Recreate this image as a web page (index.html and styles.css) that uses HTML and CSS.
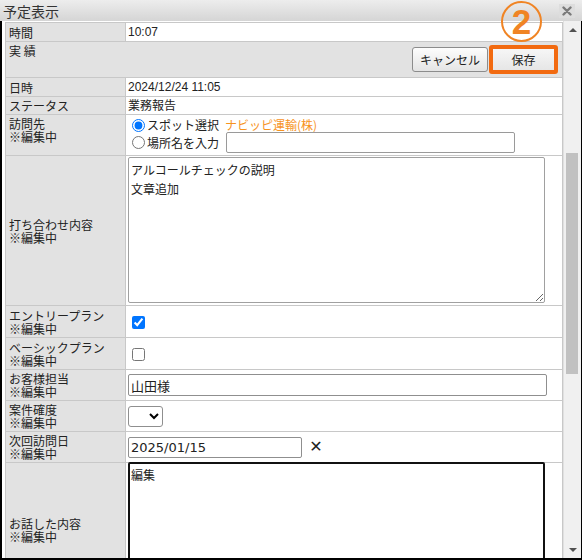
FILE: index.html
```html
<!DOCTYPE html>
<html lang="ja">
<head>
    <meta charset="UTF-8">
    <meta name="viewport" content="width=device-width, initial-scale=1.0">
    <link rel="stylesheet" href="styles.css">
    <title>予定表示</title>
</head>
<body>
    <div class="dialog">
        <div class="titleBar">
            <span class="titleText">予定表示</span>
            <button class="closeButton" aria-label="閉じる">
                <svg width="10" height="10" viewBox="0 0 10 10">
                    <path d="M1.5 1.5 L8.5 8.5 M8.5 1.5 L1.5 8.5" stroke="#7a7a7a" stroke-width="2.4" stroke-linecap="round"/>
                </svg>
            </button>
        </div>

        <div class="dialogFrame">
            <div class="dialogContent">
                <table class="scheduleTable">
                    <tr class="rowTime">
                        <th>時間</th>
                        <td>10:07</td>
                    </tr>
                    <tr class="rowResult">
                        <td colspan="2" class="resultCell">
                            <div class="resultBar">
                                <span class="resultLabel">実 績</span>
                                <div class="resultButtons">
                                    <button class="cancelButton">キャンセル</button>
                                    <button class="saveButton">保存</button>
                                </div>
                            </div>
                        </td>
                    </tr>
                    <tr class="rowDate">
                        <th>日時</th>
                        <td>2024/12/24 11:05</td>
                    </tr>
                    <tr class="rowStatus">
                        <th>ステータス</th>
                        <td>業務報告</td>
                    </tr>
                    <tr class="rowVisit">
                        <th class="topLabel">訪問先<br>※編集中</th>
                        <td class="visitCell">
                            <div class="visitLine">
                                <input type="radio" name="visitType" checked>
                                <span>スポット選択</span>
                                <span class="spotName">ナビッピ運輸(株)</span>
                            </div>
                            <div class="visitLine">
                                <input type="radio" name="visitType">
                                <span>場所名を入力</span>
                                <input type="text" class="placeField">
                            </div>
                        </td>
                    </tr>
                    <tr class="rowMeeting">
                        <th>打ち合わせ内容<br>※編集中</th>
                        <td class="areaCell">
                            <textarea class="meetingField">アルコールチェックの説明
文章追加</textarea>
                        </td>
                    </tr>
                    <tr class="rowPlan">
                        <th>エントリープラン<br>※編集中</th>
                        <td><input type="checkbox" checked></td>
                    </tr>
                    <tr class="rowPlan">
                        <th>ベーシックプラン<br>※編集中</th>
                        <td><input type="checkbox"></td>
                    </tr>
                    <tr class="rowField">
                        <th>お客様担当<br>※編集中</th>
                        <td><input type="text" class="contactField" value="山田様"></td>
                    </tr>
                    <tr class="rowField">
                        <th>案件確度<br>※編集中</th>
                        <td>
                            <select class="certaintyField">
                                <option></option>
                            </select>
                        </td>
                    </tr>
                    <tr class="rowField">
                        <th>次回訪問日<br>※編集中</th>
                        <td class="nextCell">
                            <input type="text" class="nextDateField" value="2025/01/15">
                            <span class="clearDate">✕</span>
                        </td>
                    </tr>
                    <tr class="rowTalk">
                        <th>お話した内容<br>※編集中</th>
                        <td class="areaCell">
                            <textarea class="talkField">編集</textarea>
                        </td>
                    </tr>
                </table>
            </div>

            <div class="scrollBar">
                <div class="scrollArrow"><span class="arrowUp"></span></div>
                <div class="scrollTrack">
                    <div class="scrollThumb"></div>
                </div>
                <div class="scrollArrow"><span class="arrowDown"></span></div>
            </div>
        </div>

        <!-- step marker over the save button -->
        <div class="stepMark">2</div>
    </div>
</body>
</html>
```

FILE: styles.css
```css
* {
    box-sizing: border-box;
}

body {
    margin: 0;
    width: 582px;
    height: 560px;
    overflow: hidden;
    background-color: #fff;
    font-family: "Liberation Sans", "Noto Sans CJK JP", sans-serif;
    font-size: 12px;
    color: #222;
}

.dialog {
    position: relative;
    width: 582px;
    height: 560px;
}

.titleBar {
    height: 21px;
    display: flex;
    align-items: center;
    padding-left: 3px;
    background: linear-gradient(#ededed, #d5d5d5);
}

.titleText {
    font-family: "Noto Sans CJK JP", sans-serif;
    font-size: 14px;
    line-height: 16px;
    color: #333;
}

.closeButton {
    margin-left: auto;
    margin-right: 7px;
    width: 16px;
    height: 14px;
    padding: 0;
    border: 0;
    background-color: #dddddd;
    display: flex;
    align-items: center;
    justify-content: center;
}

.dialogFrame {
    display: flex;
    height: 539px;
    border-left: 2px solid #000;
    border-right: 1px solid #000;
    border-bottom: 2px solid #000;
}

.dialogContent {
    width: 561px;
    padding: 1px 0 0 3px;
    overflow: hidden;
}

/* table */
.scheduleTable {
    width: 558px;
    table-layout: fixed;
    border-collapse: separate;
    border-spacing: 0;
    border-top: 1px solid #c8c8c8;
    border-left: 1px solid #c8c8c8;
}

.scheduleTable th,
.scheduleTable td {
    border-right: 1px solid #c8c8c8;
    border-bottom: 1px solid #c8c8c8;
    padding: 0 2px;
    line-height: 14px;
    font-weight: normal;
    text-align: left;
    vertical-align: middle;
}

.scheduleTable th {
    width: 120px;
    padding-left: 3px;
    line-height: 13px;
    background-color: #e2e2e2;
    font-family: "Noto Sans CJK JP", sans-serif;
}

.scheduleTable th.topLabel {
    vertical-align: top;
    padding-top: 2px;
}

.rowTime,
.rowDate {
    height: 19px;
}

.rowStatus {
    height: 18px;
}

.rowResult {
    height: 36px;
}

.rowVisit {
    height: 41px;
}

.rowMeeting {
    height: 150px;
}

.rowPlan {
    height: 32px;
}

.rowField {
    height: 31px;
}

.rowTalk {
    height: 134px;
}

/* result row */
.scheduleTable td.resultCell {
    padding: 0;
    background-color: #e2e2e2;
    vertical-align: top;
}

.resultBar {
    display: flex;
    height: 35px;
}

.resultLabel {
    padding: 2px 3px;
    font-family: "Noto Sans CJK JP", sans-serif;
}

.resultButtons {
    margin-left: auto;
    margin-right: 4px;
    align-self: center;
    display: flex;
    align-items: center;
    gap: 1px;
}

.cancelButton {
    width: 76px;
    height: 25px;
    padding: 0;
    border: 1px solid #8c8c8c;
    border-radius: 3px;
    background: linear-gradient(#fdfdfd, #e4e4e4);
    font-family: "Noto Sans CJK JP", sans-serif;
    font-size: 12px;
    color: #222;
}

.saveButton {
    width: 69px;
    height: 29px;
    padding: 0;
    border: 4px solid #f26a10;
    border-radius: 3px;
    background: linear-gradient(#f6f6f6, #e6e6e6);
    font-family: "Noto Sans CJK JP", sans-serif;
    font-size: 12px;
    color: #222;
}

/* visit row */
.scheduleTable td.visitCell {
    vertical-align: top;
    padding-top: 3px;
}

.visitLine {
    display: flex;
    align-items: center;
    font-family: "Noto Sans CJK JP", sans-serif;
}

.visitLine input[type="radio"] {
    width: 13px;
    height: 13px;
    margin: 0 2px 0 4px;
}

.spotName {
    margin-left: 6px;
    color: #f7931e;
}

.placeField {
    margin-left: 7px;
    width: 289px;
    height: 21px;
    border: 1px solid #9a9a9a;
    border-radius: 2px;
}

/* text areas */
.scheduleTable td.areaCell {
    vertical-align: top;
}

.meetingField,
.talkField {
    display: block;
    width: 417px;
    padding: 2px;
    font-family: "Noto Sans CJK JP", sans-serif;
    font-size: 12px;
    line-height: 19px;
    color: #222;
}

.meetingField {
    margin-top: 1px;
    height: 146px;
    border: 1px solid #a0a0a0;
    border-radius: 2px;
}

.talkField {
    margin-top: -1px;
    height: 134px;
    border: 2px solid #111;
    border-radius: 2px;
    padding: 1px;
    resize: none;
}

/* inputs */
.scheduleTable input[type="checkbox"] {
    width: 13px;
    height: 13px;
    margin: 1px 0 0 4px;
    vertical-align: middle;
}

.contactField {
    display: block;
    width: 419px;
    height: 22px;
    padding: 0 2px;
    border: 1px solid #8f8f8f;
    border-radius: 2px;
    font-family: "DejaVu Sans", "Noto Sans CJK JP", sans-serif;
    font-size: 13px;
    color: #222;
}

.certaintyField {
    display: block;
    width: 35px;
    height: 21px;
    border: 1px solid #8f8f8f;
    border-radius: 3px;
    background-color: #fff;
}

.nextCell {
    white-space: nowrap;
}

.nextDateField {
    width: 174px;
    height: 21px;
    padding: 0 2px;
    border: 1px solid #8f8f8f;
    border-radius: 2px;
    font-family: "DejaVu Sans", sans-serif;
    font-size: 13px;
    color: #222;
    vertical-align: middle;
}

.clearDate {
    margin-left: 4px;
    font-family: "DejaVu Sans", sans-serif;
    font-size: 16px;
    color: #222;
    vertical-align: middle;
}

/* scrollbar */
.scrollBar {
    width: 18px;
    display: flex;
    flex-direction: column;
    border-left: 1px solid #e0e0e0;
    background-color: #f0f0f0;
}

.scrollArrow {
    height: 17px;
    display: flex;
    align-items: center;
    justify-content: center;
}

.arrowUp,
.arrowDown {
    width: 0;
    height: 0;
    border-left: 4px solid transparent;
    border-right: 4px solid transparent;
}

.arrowUp {
    border-bottom: 4px solid #505050;
}

.arrowDown {
    border-top: 4px solid #505050;
}

.scrollTrack {
    flex: 1;
    padding: 115px 3px 0 2px;
}

.scrollThumb {
    height: 221px;
    background-color: #c1c1c1;
}

/* annotation */
.stepMark {
    position: absolute;
    left: 501px;
    top: 1px;
    width: 41px;
    height: 41px;
    border: 2px solid #f08424;
    border-radius: 50%;
    display: flex;
    align-items: center;
    justify-content: center;
    font-family: "Liberation Sans", sans-serif;
    font-weight: bold;
    font-size: 35px;
    line-height: 1;
    color: #f08424;
}
```
